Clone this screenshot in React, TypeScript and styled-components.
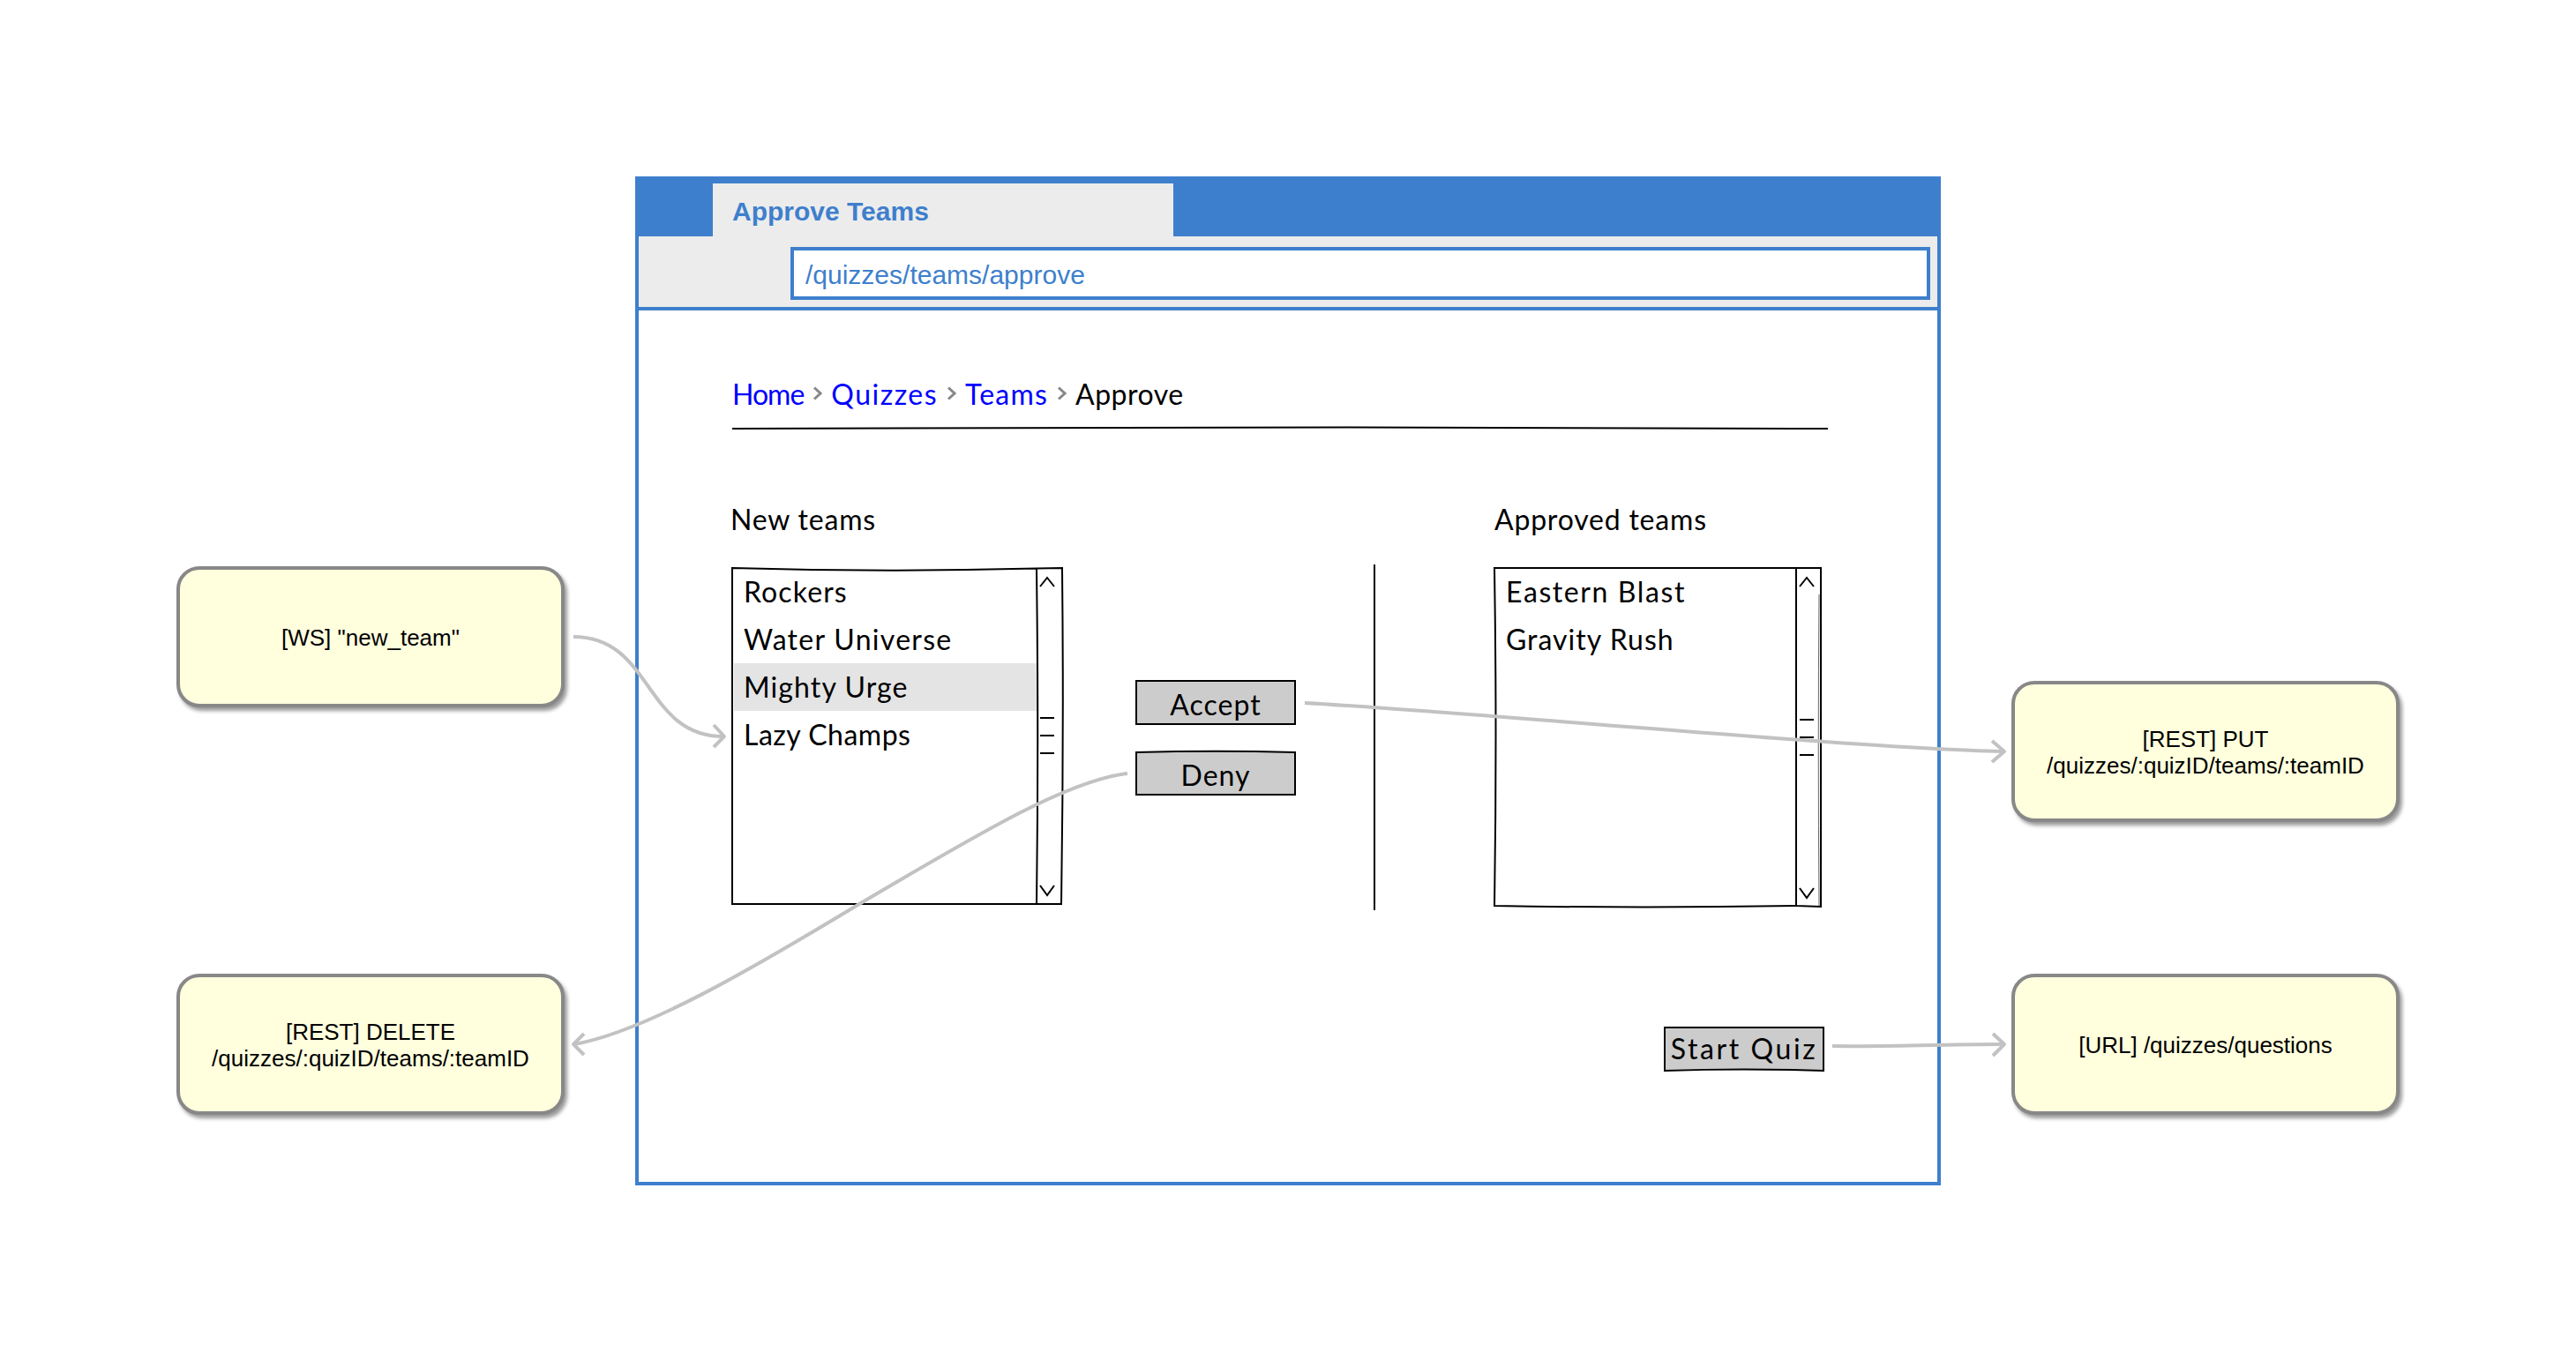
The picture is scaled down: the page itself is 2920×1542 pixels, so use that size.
import { createGlobalStyle, styled } from "styled-components";

const BLUE = "#3e7fcd";
const SKETCH_FONT = `"Lato", "Open Sans", sans-serif`;

const GlobalStyle = createGlobalStyle`
  html, body {
    margin: 0;
    background: #fff;
  }
  * {
    box-sizing: border-box;
  }
`;

const Page = styled.div`
  position: relative;
  display: flex;
  gap: 80px;
  width: 2920px;
  height: 1542px;
  padding: 200px 0 0 200px;
  overflow: hidden;
  font-family: "Liberation Sans", Arial, sans-serif;
`;

const NoteColumn = styled.div<{ $top: number; $gap: number }>`
  display: flex;
  flex-direction: column;
  flex: 0 0 440px;
  gap: ${(p) => p.$gap}px;
  padding-top: ${(p) => p.$top}px;
`;

const Note = styled.div`
  display: flex;
  align-items: center;
  justify-content: center;
  height: 160px;
  padding-top: 1px;
  background: #ffffdd;
  border: 4px solid #888;
  border-radius: 26px;
  box-shadow: 3px 4px 4px rgba(0, 0, 0, 0.4);
  color: #000;
  font-size: 26px;
  line-height: 30px;
  text-align: center;
`;

const Window = styled.div`
  display: flex;
  flex-direction: column;
  flex: 0 0 1480px;
  height: 1144px;
  border: 4px solid ${BLUE};
`;

const TitleBar = styled.div`
  display: flex;
  align-items: flex-end;
  height: 64px;
  padding-left: 84px;
  background: ${BLUE};
`;

const Tab = styled.div`
  display: flex;
  align-items: center;
  width: 522px;
  height: 60px;
  padding: 4px 0 0 22px;
  background: #ececec;
  color: ${BLUE};
  font-size: 30px;
  font-weight: 700;
`;

const AddressBar = styled.div`
  height: 84px;
  padding: 12px 8px 8px 172px;
  background: #ececec;
  border-bottom: 4px solid ${BLUE};
`;

const AddressField = styled.div`
  display: flex;
  align-items: center;
  height: 60px;
  padding: 4px 0 0 13px;
  background: #fff;
  border: 4px solid ${BLUE};
  color: ${BLUE};
  font-size: 30px;
`;

const Content = styled.div`
  display: flex;
  flex-direction: column;
  padding: 70px 124px 0 106px;
  font-family: ${SKETCH_FONT};
  font-size: 32px;
  color: #000;
`;

const Breadcrumb = styled.nav`
  display: flex;
  align-items: center;
  gap: 10px;
  height: 48px;
  margin-bottom: 12px;
`;

const Crumb = styled.span<{ $current?: boolean; $tracking: number }>`
  color: ${(p) => (p.$current ? "#000" : "#0000ff")};
  letter-spacing: ${(p) => p.$tracking}px;
`;

const Rule = styled.svg`
  display: block;
  width: 100%;
  height: 6px;
`;

const Panels = styled.div`
  display: flex;
  align-items: flex-start;
  margin-top: 76px;
`;

const Panel = styled.section<{ $width: number }>`
  flex: 0 0 ${(p) => p.$width}px;
`;

const PanelLabel = styled.h2<{ $shift?: number }>`
  height: 50px;
  margin: 0 0 30px ${(p) => p.$shift ?? 0}px;
  font-size: 32px;
  font-weight: 400;
  line-height: 50px;
  letter-spacing: 0.8px;
`;

const ListBox = styled.div<{ $height: number }>`
  position: relative;
  height: ${(p) => p.$height}px;
  padding: 0 0 0 2px;
`;

const Sketch = styled.svg`
  position: absolute;
  top: 0;
  left: 0;
  width: 100%;
  height: 100%;
  overflow: visible;
`;

const ListRow = styled.div<{ $selected?: boolean; $tracking: number }>`
  position: relative;
  width: 344px;
  height: 54px;
  padding-left: 11px;
  background: ${(p) => (p.$selected ? "#e4e4e4" : "transparent")};
  line-height: 54px;
  letter-spacing: ${(p) => p.$tracking}px;
`;

const Actions = styled.div`
  display: flex;
  flex-direction: column;
  flex: 0 0 182px;
  gap: 29px;
  margin: 207px 0 0 83px;
`;

const SketchButton = styled.button<{ $tracking?: number }>`
  position: relative;
  display: flex;
  align-items: center;
  justify-content: center;
  width: 182px;
  height: 51px;
  padding: 0;
  background: none;
  border: 0;
  color: #000;
  font-family: ${SKETCH_FONT};
  font-size: 32px;
  letter-spacing: ${(p) => p.$tracking ?? 1}px;
`;

const ButtonLabel = styled.span<{ $lift?: number }>`
  position: relative;
  top: ${(p) => p.$lift ?? 2}px;
`;

const Divider = styled.div`
  flex: 0 0 2px;
  height: 392px;
  margin: 76px 135px 0 88px;
  background: #000;
`;

const Footer = styled.div`
  display: flex;
  justify-content: flex-end;
  margin: 132px 4px 0 0;
`;

const Connectors = styled.svg`
  position: absolute;
  top: 0;
  left: 0;
  width: 2920px;
  height: 1542px;
  pointer-events: none;
`;

const Chevron = () => (
  <svg width="11" height="16" viewBox="0 0 11 16" aria-hidden="true">
    <path d="M2 1.5 L9 8 L2 14.5" fill="none" stroke="#888" strokeWidth="3" />
  </svg>
);

const scrollMarks = (left: number, bottom: number, firstTick: number) => (
  <g fill="none" stroke="#000" strokeWidth="2">
    <path d={`M${left} 21 L${left + 8} 11 L${left + 16} 21`} />
    <path d={`M${left} ${bottom - 11} L${left + 8} ${bottom} L${left + 16} ${bottom - 11}`} />
    <path d={`M${left} ${firstTick} h16 M${left} ${firstTick + 20} h16 M${left} ${firstTick + 40} h16`} />
  </g>
);

const newTeams = [
  { name: "Rockers", tracking: 1.1 },
  { name: "Water Universe", tracking: 1.3 },
  { name: "Mighty Urge", tracking: 1.1 },
  { name: "Lazy Champs", tracking: 0.5 },
];

const approvedTeams = [
  { name: "Eastern Blast", tracking: 1.6 },
  { name: "Gravity Rush", tracking: 1 },
];

export default function App() {
  return (
    <Page>
      <GlobalStyle />

      <NoteColumn $top={442} $gap={302}>
        <Note>[WS] "new_team"</Note>
        <Note>
          [REST] DELETE
          <br />
          /quizzes/:quizID/teams/:teamID
        </Note>
      </NoteColumn>

      <Window>
        <TitleBar>
          <Tab>Approve Teams</Tab>
        </TitleBar>
        <AddressBar>
          <AddressField>/quizzes/teams/approve</AddressField>
        </AddressBar>

        <Content>
          <Breadcrumb>
            <Crumb $tracking={-1}>Home</Crumb>
            <Chevron />
            <Crumb $tracking={1.5}>Quizzes</Crumb>
            <Chevron />
            <Crumb $tracking={1.2}>Teams</Crumb>
            <Chevron />
            <Crumb $current $tracking={0.5}>
              Approve
            </Crumb>
          </Breadcrumb>
          <Rule viewBox="0 0 1242 6" preserveAspectRatio="none">
            <path
              d="M0 4 C300 3 500 2.6 700 2.4 C900 2.4 1100 3 1242 4"
              fill="none"
              stroke="#000"
              strokeWidth="2"
            />
          </Rule>

          <Panels>
            <Panel $width={374}>
              <PanelLabel $shift={-2}>New teams</PanelLabel>
              <ListBox $height={381}>
                {newTeams.map((team) => (
                  <ListRow key={team.name} $tracking={team.tracking} $selected={team.name === "Mighty Urge"}>
                    {team.name}
                  </ListRow>
                ))}
                <Sketch viewBox="0 0 374 381">
                  <path
                    d="M0 0 Q170 5 345 0.5 L374 0 Q376 190 373 381 L0 381 Z M345 0.5 Q347.5 190 345 381"
                    fill="none"
                    stroke="#000"
                    strokeWidth="2"
                  />
                  {scrollMarks(349, 371, 170)}
                </Sketch>
              </ListBox>
            </Panel>

            <Actions>
              <SketchButton>
                <Sketch viewBox="0 0 182 51">
                  <rect x="1" y="1" width="180" height="49" fill="#ccc" stroke="#000" strokeWidth="2" />
                </Sketch>
                <ButtonLabel>Accept</ButtonLabel>
              </SketchButton>
              <SketchButton>
                <Sketch viewBox="0 0 182 51">
                  <path d="M1 2 Q91 -0.5 181 2 L181 50 L1 50 Z" fill="#ccc" stroke="#000" strokeWidth="2" />
                </Sketch>
                <ButtonLabel>Deny</ButtonLabel>
              </SketchButton>
            </Actions>

            <Divider />

            <Panel $width={370}>
              <PanelLabel>Approved teams</PanelLabel>
              <ListBox $height={384}>
                {approvedTeams.map((team) => (
                  <ListRow key={team.name} $tracking={team.tracking}>
                    {team.name}
                  </ListRow>
                ))}
                <Sketch viewBox="0 0 370 384">
                  <path
                    d="M0 0 L370 0 L370 384 L342 383 Q170 386 0 383 Q3 190 0 0 Z M342 0 L342 383"
                    fill="none"
                    stroke="#000"
                    strokeWidth="2"
                  />
                  <path d="M368 30 Q366.5 200 368 383" fill="none" stroke="#666" strokeWidth="1" />
                  {scrollMarks(346, 374, 172)}
                </Sketch>
              </ListBox>
            </Panel>
          </Panels>

          <Footer>
            <SketchButton $tracking={2.6}>
              <Sketch viewBox="0 0 182 51">
                <path d="M1 1 L181 1 L181 50 Q91 47 1 50 Z" fill="#ccc" stroke="#000" strokeWidth="2" />
              </Sketch>
              <ButtonLabel $lift={-1}>Start Quiz</ButtonLabel>
            </SketchButton>
          </Footer>
        </Content>
      </Window>

      <NoteColumn $top={572} $gap={172}>
        <Note>
          [REST] PUT
          <br />
          /quizzes/:quizID/teams/:teamID
        </Note>
        <Note>[URL] /quizzes/questions</Note>
      </NoteColumn>

      <Connectors viewBox="0 0 2920 1542">
        <g fill="none" stroke="#c2c2c2" strokeWidth="4" strokeLinejoin="round">
          <path d="M650 722 C740 722 730 835 820 835" />
          <path d="M809 822 L821 835 L809 847" />

          <path d="M1278 877 C1210 885 1110 945 974 1025 C850 1100 730 1170 651 1184" />
          <path d="M662 1172 L650 1184 L662 1196" />

          <path d="M1479 797 C1700 810 2100 848 2271 852" />
          <path d="M2258 840 L2272 852 L2258 864" />

          <path d="M2077 1186 C2130 1187 2200 1184 2271 1184" />
          <path d="M2259 1172 L2272 1184 L2259 1197" />
        </g>
      </Connectors>
    </Page>
  );
}
